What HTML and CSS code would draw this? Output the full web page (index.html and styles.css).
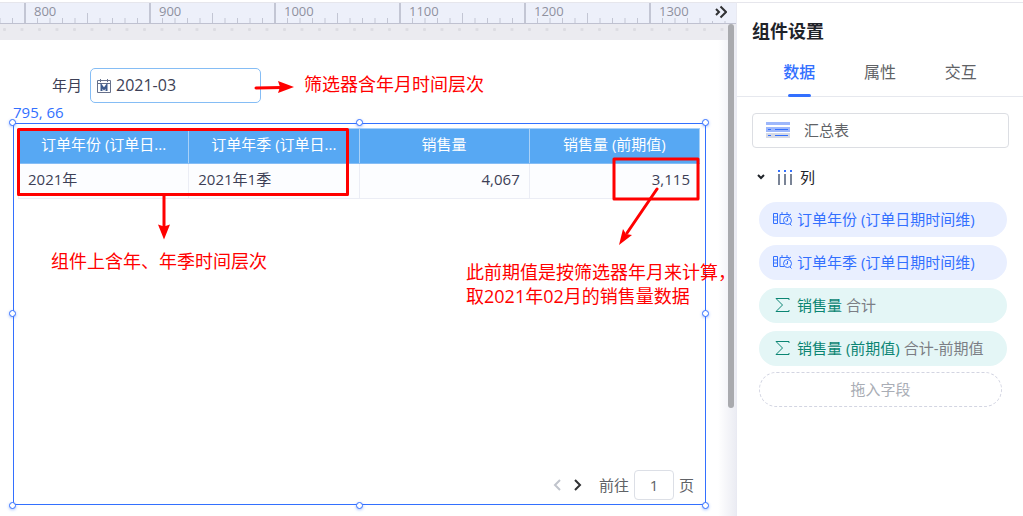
FILE: index.html
```
<!DOCTYPE html>
<html lang="zh-CN">
	<head>
		<title>组件设置</title>
		<meta charset="utf-8" />
		<link rel="stylesheet" href="styles.css">
	</head>
	<body>
		<main class="workspace">
			<div class="ruler">
				<svg class="ruler-ticks" width="100%" height="21">
					<defs>
						<pattern id="ticks" x="24" width="125" height="21" patternUnits="userSpaceOnUse">
							<path class="tick-major" d="M0 0h2v21h-2z" />
							<path class="tick-minor" d="M13.5 15v6M26 15v6M38.5 15v6M51 15v6M63.5 10v11M76 15v6M88.5 15v6M101 15v6M113.5 15v6" />
						</pattern>
					</defs>
					<rect width="100%" height="21" fill="url(#ticks)" />
				</svg>
				<span class="ruler-label">800</span>
				<span class="ruler-label">900</span>
				<span class="ruler-label">1000</span>
				<span class="ruler-label">1100</span>
				<span class="ruler-label">1200</span>
				<span class="ruler-label">1300</span>
				<button class="collapse-btn" aria-label="收起">
					<svg width="12" height="14" viewBox="0 0 12 14"><path d="M1 4l3 3-3 3M5.500 1.500L11 7l-5.500 5.500" /></svg>
				</button>
			</div>

			<div class="gutter">
				<svg width="100%" height="16">
					<defs>
						<pattern id="dots" x="3" width="17.500" height="16" patternUnits="userSpaceOnUse">
							<rect y="4" width="3" height="3" rx="1" fill="#dcdce2" />
						</pattern>
					</defs>
					<rect width="100%" height="16" fill="url(#dots)" />
				</svg>
			</div>

			<div class="board">
				<div class="filter">
					<label for="month">年月</label>
					<div class="date-box">
						<svg width="14" height="14" viewBox="0 0 14 14">
							<path d="M.5 1.500h13v12H.5zM.5 4.500h13M3.500 0v3M10.500 0v3" />
							<path class="letter" d="M4.500 12V6.500L7 10l2.500-3.500V12" />
						</svg>
						<input id="month" type="text" value="2021-03">
					</div>
				</div>
				<div class="coords">795, 66</div>

				<section class="widget">
					<table class="data-table">
						<thead>
							<tr>
								<th>订单年份 (订单日...</th>
								<th>订单年季 (订单日...</th>
								<th>销售量</th>
								<th>销售量 (前期值)</th>
							</tr>
						</thead>
						<tbody>
							<tr>
								<td>2021年</td>
								<td>2021年1季</td>
								<td class="num">4,067</td>
								<td class="num">3,115</td>
							</tr>
						</tbody>
					</table>

					<div class="pager">
						<button class="page-btn" aria-label="上一页" disabled>
							<svg width="8" height="12" viewBox="0 0 8 12"><path d="M7 1L2 6l5 5" /></svg>
						</button>
						<button class="page-btn" aria-label="下一页">
							<svg width="8" height="12" viewBox="0 0 8 12"><path d="M1 1l5 5-5 5" /></svg>
						</button>
						<label for="page">前往</label>
						<input id="page" type="text" value="1">
						<span>页</span>
					</div>

					<!-- Resize handles -->
					<i class="handle top left"></i>
					<i class="handle top center"></i>
					<i class="handle top right"></i>
					<i class="handle middle left"></i>
					<i class="handle middle right"></i>
					<i class="handle bottom left"></i>
					<i class="handle bottom center"></i>
					<i class="handle bottom right"></i>
				</section>
			</div>

			<div class="edge-shade"></div>
			<div class="scrollbar"></div>

			<!-- Notes drawn over the board -->
			<svg class="marks" width="736" height="516">
				<rect x="18.500" y="129.500" width="329" height="65" />
				<rect x="614" y="159" width="84" height="40" />
				<path d="M256 88l26-.5M164 196v32M657 189l-30 44" />
				<path class="head" d="M294 87l-16-6 2 6-2 6zM164 239.500l-6-15 6 2 6-2zM619 245l4-16 3 5 6 1z" />
			</svg>
			<p class="note note-filter">筛选器含年月时间层次</p>
			<p class="note note-widget">组件上含年、年季时间层次</p>
			<p class="note note-value">此前期值是按筛选器年月来计算，<br>取2021年02月的销售量数据</p>
		</main>

		<aside class="panel">
			<h1 class="panel-title">组件设置</h1>
			<nav class="tabs">
				<button class="tab active">数据</button>
				<button class="tab">属性</button>
				<button class="tab">交互</button>
			</nav>

			<div class="panel-body">
				<button class="type-select">
					<svg width="24" height="16" viewBox="0 0 24 16">
						<path fill="#9db7fb" d="M0 0h24v3H0z" />
						<path fill="#9db7fb" d="M0 5h24v5H0z" />
						<path fill="#d5d9e6" d="M0 11h24v5H0z" />
						<path fill="#3370ff" d="M2 7h3v1H2zM9 7h13v1H9zM2 13h3v1H2zM9 13h13v1H9z" />
					</svg>
					汇总表
				</button>

				<h2 class="group-title">
					<svg width="8" height="6" viewBox="0 0 8 6"><path d="M1 1l3 3 3-3" /></svg>
					<svg class="columns-icon" width="14" height="15" viewBox="0 0 14 15">
						<path fill="#3370ff" d="M0 0h2v2H0zM6 0h2v2H6zM12 0h2v2h-2z" />
						<path fill="#7a8496" d="M0 4h2v11H0zM6 4h2v11H6zM12 4h2v11h-2z" />
					</svg>
					列
				</h2>

				<ul class="fields">
					<li class="field dimension">
						<svg width="20" height="14" viewBox="0 0 20 14">
							<path d="M.5 1.500h4v10h-4zM.5 5h4M.5 8h4M16 4V2.500H7v9h4M9 0v3M14 0v3" />
							<circle cx="14.500" cy="8.500" r="4" />
							<path d="M14.500 6v3h-2M16 3.500l2-1.500M17 12l1.500 1.500" />
						</svg>
						订单年份 (订单日期时间维)
					</li>
					<li class="field dimension">
						<svg width="20" height="14" viewBox="0 0 20 14">
							<path d="M.5 1.500h4v10h-4zM.5 5h4M.5 8h4M16 4V2.500H7v9h4M9 0v3M14 0v3" />
							<circle cx="14.500" cy="8.500" r="4" />
							<path d="M14.500 6v3h-2M16 3.500l2-1.500M17 12l1.500 1.500" />
						</svg>
						订单年季 (订单日期时间维)
					</li>
					<li class="field measure">
						<svg width="20" height="16" viewBox="0 0 20 16"><path d="M16 3V1.500H3L9.500 8 3 14.500h13V13" /></svg>
						<span>销售量 <em>合计</em></span>
					</li>
					<li class="field measure">
						<svg width="20" height="16" viewBox="0 0 20 16"><path d="M16 3V1.500H3L9.500 8 3 14.500h13V13" /></svg>
						<span>销售量 (前期值) <em>合计-前期值</em></span>
					</li>
				</ul>
				<div class="drop-zone">拖入字段</div>
			</div>
		</aside>
	</body>
</html>
```
FILE: styles.css
```
* {
	padding: 0;
	margin: 0;
	box-sizing: border-box;
}

body {
	font-family: "Open Sans", "Noto Sans CJK SC", sans-serif;
	font-size: 15px;
	line-height: 20px;
	color: #3d3f56;
	background: #fff;
	height: 100vh;
	padding-top: 2px;
	overflow: hidden;

	display: flex;
}

button,
input {
	font: inherit;
	color: inherit;
	background: none;
	border: none;
}

svg {
	display: block;
	flex: none;
	fill: none;
}

/* Workspace */
.workspace {
	flex: 1;
	min-width: 0;
	border-top: 1px solid #e6e6ec;
	position: relative;

	display: flex;
	flex-direction: column;
}

.ruler {
	position: relative;
	height: 21px;
	background: #edf0fa;
	border-bottom: 1px solid #bfc1d0;
	padding-left: 34px;
	overflow: hidden;

	display: flex;
	flex: none;
}

.ruler-ticks {
	position: absolute;
	left: 0;
	top: 0;
}

.tick-major {
	fill: #c3c6d4;
}

.tick-minor {
	stroke: #c3c6d4;
}

.ruler-label {
	flex: 0 0 125px;
	font-size: 13px;
	line-height: 16px;
	color: #8f919f;
}

.collapse-btn {
	position: absolute;
	right: 0;
	top: 0;
	width: 24px;
	height: 18px;
	padding-left: 3px;
	background: #edf0fa;

	display: flex;
	align-items: center;
}

.collapse-btn path {
	stroke: #303133;
	stroke-width: 2;
}

.gutter {
	flex: none;
	background: #ebebf0;
}

.board {
	flex: 1;
	padding: 28px 30px 11px 13px;

	display: flex;
	flex-direction: column;
}

.filter {
	padding-left: 39px;

	display: flex;
	align-items: center;
	gap: 8px;
}

.filter label,
.date-box input {
	padding-bottom: 2px;
}

.date-box {
	width: 171px;
	height: 35px;
	border: 1px solid #85bdf5;
	border-radius: 5px;
	padding-left: 6px;

	display: flex;
	align-items: center;
	gap: 5px;
}

.date-box path {
	stroke: #66708a;
}

.date-box .letter {
	stroke: #3d5a8c;
	stroke-width: 2;
}

.date-box input {
	width: 130px;
	font-size: 16px;
}

.coords {
	color: #3370ff;
	line-height: 18px;
	padding-bottom: 2px;
}

.widget {
	flex: 1;
	position: relative;
	border: 1px solid #3370ff;
	padding: 4px 5px 4px 4px;

	display: flex;
	flex-direction: column;
	justify-content: space-between;
}

.data-table {
	width: 100%;
	table-layout: fixed;
	border-collapse: collapse;
}

.data-table th {
	height: 35px;
	background: #57a8f3;
	border: 1px solid #a8d1f8;
	border-bottom-color: #85bdf5;
	padding-bottom: 4px;
	color: #fff;
	font-weight: normal;
	white-space: nowrap;
}

.data-table td {
	height: 35px;
	background: #fcfdff;
	border: 1px solid #ebedf5;
	padding: 0 9px 5px;
}

.data-table .num {
	text-align: right;
}

.pager {
	padding-right: 6px;
	color: #606266;

	display: flex;
	align-items: center;
	justify-content: flex-end;
	gap: 5px;
}

.page-btn {
	padding: 0 4px;
}

.page-btn path {
	stroke: #303133;
	stroke-width: 2;
}

.page-btn:disabled path {
	stroke: #c0c4cc;
}

.pager label {
	padding-left: 8px;
}

.pager input {
	width: 40px;
	height: 30px;
	border: 1px solid #dcdfe6;
	border-radius: 4px;
	text-align: center;
}

.handle {
	position: absolute;
	width: 7px;
	height: 7px;
	background: #fff;
	border: 1px solid #3370ff;
	border-radius: 50%;
	box-shadow: 0 1px 3px rgba(51, 112, 255, 0.4);
}

.top { top: -5px; }
.middle { top: calc(50% - 4px); }
.bottom { bottom: -5px; }
.left { left: -5px; }
.center { left: calc(50% - 4px); }
.right { right: -4px; }

.edge-shade {
	position: absolute;
	right: 0;
	top: 37px;
	bottom: 0;
	width: 18px;
	background: linear-gradient(to right, rgba(235, 236, 243, 0), #ebecf3);
}

.scrollbar {
	position: absolute;
	right: 2px;
	top: 21px;
	width: 6px;
	height: 384px;
	background: #a9aaae;
	border-radius: 3px;
}

/* Notes */
.marks {
	position: absolute;
	left: 0;
	top: -3px;
	stroke: #f00;
	stroke-width: 3;
	stroke-linejoin: round;
	stroke-linecap: round;
}

.marks .head {
	fill: #f00;
	stroke: none;
}

.note {
	position: absolute;
	font-size: 18px;
	line-height: 24px;
	color: #f00;
	white-space: nowrap;
}

.note-filter {
	left: 304px;
	top: 69px;
}

.note-widget {
	left: 51px;
	top: 246px;
}

.note-value {
	left: 466px;
	top: 257px;
}

/* Settings panel */
.panel {
	width: 287px;
	flex: none;
	border-top: 1px solid #e6e6ec;
	border-left: 1px solid #e9eaf2;
	color: #606266;
}

.panel-title {
	padding: 16px 15px 0;
	font-size: 18px;
	line-height: 24px;
	color: #1f2329;
}

.tabs {
	border-bottom: 1px solid #e6e8ee;
	padding: 6px 22px 0;

	display: flex;
}

.tab {
	position: relative;
	width: 81px;
	height: 47px;
	padding-bottom: 2px;
	font-size: 16px;
}

.tab.active {
	color: #3370ff;
	font-weight: 500;
}

.tab.active::after {
	content: "";
	position: absolute;
	left: 29px;
	bottom: -1px;
	width: 23px;
	height: 3px;
	background: #3370ff;
	border-radius: 2px;
}

.panel-body {
	padding: 16px 14px 0 15px;
}

.type-select {
	width: 100%;
	height: 35px;
	border: 1px solid #dcdee3;
	border-radius: 4px;
	padding: 0 0 1px 13px;

	display: flex;
	align-items: center;
	gap: 14px;
}

.group-title {
	height: 54px;
	padding: 4px 0 0 5px;
	font-size: 15px;
	font-weight: normal;
	color: #1f2329;

	display: flex;
	align-items: center;
}

.group-title path {
	stroke: #1f2329;
	stroke-width: 2;
}

.group-title .columns-icon {
	margin: 0 8px 0 13px;
}

.columns-icon path {
	stroke: none;
}

.fields {
	list-style: none;
	padding: 0 2px 0 7px;

	display: flex;
	flex-direction: column;
	gap: 8px;
}

.field {
	height: 35px;
	border-radius: 18px;
	padding: 0 0 2px 14px;
	white-space: nowrap;

	display: flex;
	align-items: center;
	gap: 4px;
}

.dimension {
	background: #e9efff;
	color: #3370ff;
}

.dimension svg {
	stroke: #3370ff;
}

.measure {
	background: #e4f6f6;
	color: #0b8573;
}

.measure svg {
	stroke: #0b8573;
}

.measure em {
	font-style: normal;
	color: #7b7e85;
}

.drop-zone {
	height: 35px;
	margin: 6px 7px 0;
	border: 1px dashed #d3d5e2;
	border-radius: 18px;
	line-height: 33px;
	text-align: center;
	color: #a9adb5;
}
```
